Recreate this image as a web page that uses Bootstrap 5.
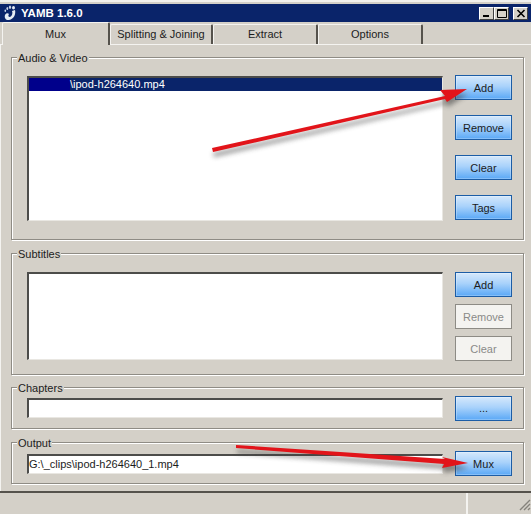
<!DOCTYPE html>
<html lang="en">
<head>
  <meta charset="UTF-8">
  <title>YAMB 1.6.0</title>
  <link href="https://cdn.jsdelivr.net/npm/bootstrap@5.3.0/dist/css/bootstrap.min.css" rel="stylesheet">
  <style>
    html, body { height: 514px; overflow: hidden; }
    body { background: #d4d0c8; color: #1c1c1c; font: 11px/14px "Liberation Sans", sans-serif; }
    .yamb-win { position: relative; width: 531px; height: 514px; border-top: 2px solid #f2f1ed; }
    .yamb-title { height: 18px; margin-top: 2px; padding: 0 3px 0 3px; background: #0a246a; color: #fff; font: bold 11.5px/18px "Liberation Sans", sans-serif; flex-shrink: 0; }
    .yamb-winbtn { width: 15px; height: 13px; background: #d4d0c8; border: 1px solid; border-color: #fff #404040 #404040 #fff; color: #000; }
    .yamb-tabs { height: 22px; padding: 0 0 0 2px; flex-shrink: 0; }
    .yamb-tab { width: 105px; height: 20px; text-align: center; line-height: 19px; border: 1px solid; border-color: #f4f3f0 #55524c transparent #f4f3f0; border-width: 1px 2px 0 1px; border-radius: 2px 2px 0 0; margin-top: 2px; }
    .yamb-tab-first { position: relative; margin-top: 0; height: 23px; width: 108px; padding-top: 2px; background: #d4d0c8; }
    .yamb-tab-splitting { width: 103px; }
    .yamb-page { padding: 12px 7px 0 10px; height: 449px; border-top: 1px solid #f4f3f0; border-left: 1px solid #f4f3f0; flex-shrink: 0; }
    .yamb-grp { position: relative; border: 1px solid #8f8c85; box-shadow: 1px 1px 0 #fff, inset 1px 1px 0 #fff; padding: 0 11px 0 15px; width: 513px; }
    .yamb-grp-label { position: absolute; left: 5px; top: -7px; background: #d4d0c8; padding: 0 1px; }
    .yamb-list { background: #fff; border: 1px solid; border-color: #4c4c4a #e9e7e2 #e9e7e2 #4c4c4a; border-width: 2px 1px 1px 2px; width: 416px; }
    .yamb-row { background: #0a246a; color: #fff; height: 13px; line-height: 13px; }
    .yamb-row-mask { background: #00008b; width: 41px; }
    .yamb-field { height: 20px; line-height: 17px; }
    .yamb-btn { width: 57px; height: 25px; padding: 0; font: inherit; color: #1c1c1c; text-align: center; border: 1px solid #1c5da6; background: linear-gradient(#d5e8fb, #a9d2fb 45%, #5aa8f6); box-shadow: inset 0 0 0 1px rgba(255,255,255,.25); }
    .yamb-btn-off { color: #8a8a88; background: #f4f3f0; border-color: #8d8b85; box-shadow: none; }
    .yamb-btns-wide { gap: 15px; }
    .yamb-btns-tight { gap: 7px; }
    .yamb-av { height: 183px; margin-bottom: 13px; padding-top: 17px; }
    .yamb-av .yamb-list { height: 145px; margin-top: 1px; }
    .yamb-sub { height: 122px; margin-bottom: 12px; padding-top: 18px; }
    .yamb-sub .yamb-list { height: 88px; }
    .yamb-chap { height: 42px; margin-bottom: 13px; }
    .yamb-out { height: 42px; padding-top: 1px; }
    .yamb-status { flex: 1; margin-top: -2px; border-top: 2px solid #55524c; position: relative; }
    .yamb-cell { width: 65px; border-left: 2px solid #f4f3f0; }
    .yamb-overlay { position: absolute; left: 0; top: -2px; width: 531px; height: 514px; pointer-events: none; }
  </style>
</head>
<body>
  <div class="yamb-win d-flex flex-column">
    <!-- title bar -->
    <div class="yamb-title d-flex align-items-center">
      <svg width="14" height="16" viewBox="0 0 14 16" class="flex-shrink-0" style="margin-right:4px">
        <path d="M12 5C13 9 11 14 6 15 3 15.500 1 13 2 10 3 8 5 8 6 9 5 10 5 12 7 12 9 11 10 8 9 6 10 6 11 5 12 5z" fill="#e6ebf4"/>
        <ellipse cx="10.500" cy="2.800" rx="1.500" ry="1.700" fill="#e6ebf4"/>
        <ellipse cx="7" cy="2.200" rx="1.100" ry="1.700" fill="#c9d4e8"/>
        <ellipse cx="4.300" cy="3.500" rx=".9" ry="1.500" fill="#c9d4e8"/>
        <ellipse cx="2.300" cy="5.800" rx=".8" ry="1.300" fill="#c9d4e8"/>
      </svg>
      <span>YAMB 1.6.0</span>
      <div class="ms-auto d-flex">
        <span class="yamb-winbtn d-flex justify-content-center"><svg width="10" height="11"><rect x="1" y="7" width="6" height="2" fill="#000"/></svg></span>
        <span class="yamb-winbtn d-flex justify-content-center"><svg width="12" height="11"><path d="M1.500 1.500h9v8h-9zM1 2.500h10" fill="none" stroke="#000"/></svg></span>
        <span class="yamb-winbtn d-flex justify-content-center ms-1"><svg width="10" height="11"><path d="M1.500 2l7 7M8.500 2l-7 7" stroke="#000" stroke-width="1.600"/></svg></span>
      </div>
    </div>

    <!-- tabs -->
    <div class="yamb-tabs d-flex">
      <div class="yamb-tab yamb-tab-first">Mux</div>
      <div class="yamb-tab yamb-tab-splitting">Splitting &amp; Joining</div>
      <div class="yamb-tab">Extract</div>
      <div class="yamb-tab">Options</div>
    </div>

    <div class="yamb-page">
      <div class="yamb-grp yamb-av d-flex justify-content-between align-items-start">
        <span class="yamb-grp-label">Audio &amp; Video</span>
        <div class="yamb-list"><div class="yamb-row d-flex"><div class="yamb-row-mask"></div><div>\ipod-h264640.mp4</div></div></div>
        <div class="d-flex flex-column yamb-btns-wide">
          <button class="yamb-btn" type="button">Add</button>
          <button class="yamb-btn" type="button">Remove</button>
          <button class="yamb-btn" type="button">Clear</button>
          <button class="yamb-btn" type="button">Tags</button>
        </div>
      </div>

      <div class="yamb-grp yamb-sub d-flex justify-content-between align-items-start">
        <span class="yamb-grp-label">Subtitles</span>
        <div class="yamb-list"></div>
        <div class="d-flex flex-column yamb-btns-tight">
          <button class="yamb-btn" type="button">Add</button>
          <button class="yamb-btn yamb-btn-off" type="button">Remove</button>
          <button class="yamb-btn yamb-btn-off" type="button">Clear</button>
        </div>
      </div>

      <div class="yamb-grp yamb-chap d-flex justify-content-between align-items-center">
        <span class="yamb-grp-label">Chapters</span>
        <div class="yamb-list yamb-field"></div>
        <button class="yamb-btn" type="button">...</button>
      </div>

      <div class="yamb-grp yamb-out d-flex justify-content-between align-items-center">
        <span class="yamb-grp-label">Output</span>
        <div class="yamb-list yamb-field">G:\_clips\ipod-h264640_1.mp4</div>
        <button class="yamb-btn" type="button">Mux</button>
      </div>
    </div>

    <!-- status bar -->
    <div class="yamb-status d-flex">
      <div class="flex-grow-1"></div>
      <div class="yamb-cell d-flex justify-content-end">
        <svg width="16" height="18" viewBox="0 0 16 18"><path d="M15 7L5 17M15 11l-6 6M15 15l-2 2" stroke="#85827b" stroke-width="1.400"/></svg>
      </div>
    </div>

    <!-- red arrows drawn on top of the screenshot -->
    <svg class="yamb-overlay" viewBox="0 0 531 514">
      <defs><filter id="yamb-sh" x="-10%" y="-60%" width="120%" height="250%"><feGaussianBlur stdDeviation="2.500"/></filter></defs>
      <g fill="#3a3a3a" opacity=".55" filter="url(#yamb-sh)" transform="translate(1 5)">
        <path d="M212 148L445 96 440 90 467 89 447 102 445 99 213 152z"/>
        <path d="M236 445L445 459 442 457 468 463 442 468 444 464 236 448z"/>
      </g>
      <g fill="#e2141a">
        <path d="M212 148L445 96 440 90 467 89 447 102 445 99 213 152z"/>
        <path d="M236 445L445 459 442 457 468 463 442 468 444 464 236 448z"/>
      </g>
    </svg>
  </div>
  <script src="https://cdn.jsdelivr.net/npm/bootstrap@5.3.0/dist/js/bootstrap.bundle.min.js"></script>
</body>
</html>
